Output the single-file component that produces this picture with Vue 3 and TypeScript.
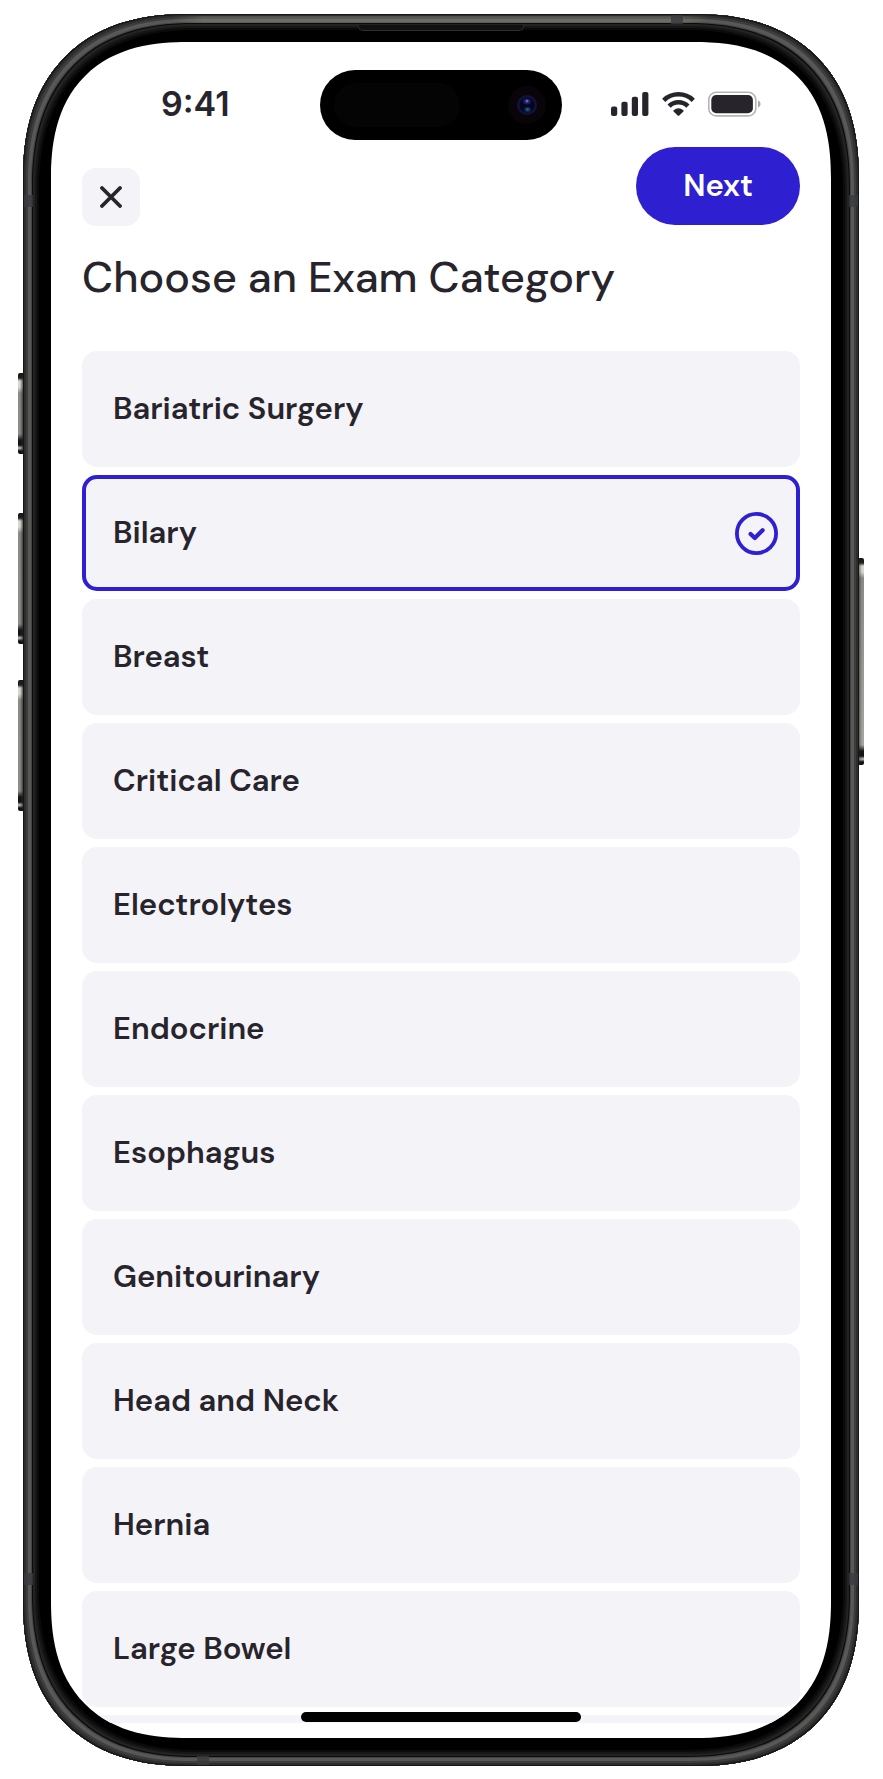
<script setup lang="ts">
import { ref } from 'vue'

const categories: string[] = [
  'Bariatric Surgery',
  'Bilary',
  'Breast',
  'Critical Care',
  'Electrolytes',
  'Endocrine',
  'Esophagus',
  'Genitourinary',
  'Head and Neck',
  'Hernia',
  'Large Bowel',
]

const selected = ref<string>('Bilary')
</script>

<template>
  <div class="stage">
    <div class="device">
      <span class="key action"></span>
      <span class="key volume-up"></span>
      <span class="key volume-down"></span>
      <span class="key power"></span>
      <div class="body">
        <span class="sheen"></span>
        <span class="band band-top"></span>
        <span class="band band-left-high"></span>
        <span class="band band-right-high"></span>
        <span class="band band-left-low"></span>
        <span class="band band-right-low"></span>
        <span class="band band-bottom"></span>
        <span class="earpiece"></span>

        <main class="screen">
          <div class="status">
            <span class="time">9:41</span>
            <div class="island">
              <span class="sensor"></span>
              <svg class="camera" viewBox="0 0 38 38" aria-hidden="true">
                <circle cx="19" cy="19" r="19" fill="#08040a" />
                <circle cx="19" cy="19" r="10" fill="#11143a" />
                <circle cx="19" cy="19" r="7.5" fill="#05051f" />
                <ellipse cx="19" cy="15.5" rx="4" ry="3" fill="#1a1a62" />
                <circle cx="19" cy="15" r="1.5" fill="#6468ac" />
                <ellipse cx="19.5" cy="23.5" rx="3.5" ry="2.5" fill="#102a58" />
                <circle cx="19.5" cy="23.5" r="1.3" fill="#206a68" />
              </svg>
            </div>
            <div class="indicators">
              <svg width="38" height="26" viewBox="0 0 38 26" aria-hidden="true">
                <g fill="#27242c">
                  <rect x="0" y="15.5" width="6.2" height="9.5" rx="2" />
                  <rect x="10.4" y="10.7" width="6.2" height="14.3" rx="2" />
                  <rect x="20.8" y="5.7" width="6.2" height="19.3" rx="2" />
                  <rect x="31.2" y="1" width="6.2" height="24" rx="2" />
                </g>
              </svg>
              <svg width="33" height="26" viewBox="0 0 33 26" aria-hidden="true">
                <g fill="none" stroke="#27242c" stroke-width="4.6">
                  <path d="M1.7 9.3 A21.3 21.3 0 0 1 31.3 9.3" />
                  <path d="M7.1 15.1 A13.4 13.4 0 0 1 25.9 15.1" />
                </g>
                <path d="M11.6 19.2 Q16.5 15.2 21.4 19.2 Q22 19.8 21.4 20.4 L17.3 24.5 Q16.5 25.2 15.7 24.5 L11.6 20.4 Q11 19.8 11.6 19.2Z" fill="#27242c" />
              </svg>
              <svg width="53" height="26" viewBox="0 0 53 26" aria-hidden="true">
                <rect x="0.8" y="1.3" width="47" height="23.6" rx="7.5" fill="none" stroke="#b5b4b8" stroke-width="1.6" />
                <rect x="3.3" y="4" width="41.6" height="18.2" rx="5" fill="#27242c" />
                <path d="M50 9.3 Q52.6 10.4 52.6 13 Q52.6 15.6 50 16.8Z" fill="#aaa9ad" />
              </svg>
            </div>
          </div>

          <header class="toolbar">
            <button class="close" type="button" aria-label="Close">
              <svg width="22" height="22" viewBox="0 0 22 22" aria-hidden="true">
                <path d="M2 2 L20 20 M20 2 L2 20" stroke="#27242c" stroke-width="3.8" stroke-linecap="round" />
              </svg>
            </button>
            <button class="next" type="button">Next</button>
          </header>

          <h1 id="heading">Choose an Exam Category</h1>

          <div class="list" role="radiogroup" aria-labelledby="heading">
            <label v-for="name in categories" :key="name" class="option" :class="{ chosen: selected === name }">
              <input v-model="selected" type="radio" name="category" :value="name" />
              <span>{{ name }}</span>
              <svg v-if="selected === name" width="43" height="43" viewBox="0 0 43 43" fill="none" stroke="#2e1fd1" aria-hidden="true">
                <circle cx="21.5" cy="21.5" r="19.6" stroke-width="3.8" />
                <path d="M15.6 22 L19.8 26 L27.6 18.2" stroke-width="4.2" stroke-linecap="round" stroke-linejoin="round" />
              </svg>
            </label>
            <div class="peek"></div>
          </div>

          <span class="home"></span>
        </main>
      </div>
    </div>
  </div>
</template>

<style>
body {
  margin: 0;
  background: #fff;
}
</style>

<style scoped>
* {
  box-sizing: border-box;
}

.stage {
  padding: 14px 24px 12px 23px;
  color: #27242c;
  font-family: "DM Sans", Inter, "Liberation Sans", sans-serif;
}

.device {
  position: relative;
}

.body {
  position: relative;
  padding: 28px;
  border-radius: 147px;
  background: #000;
  box-shadow:
    inset 0 0 0 1px #151515,
    inset 0 0 0 3px #2c2d2c,
    inset 0 0 0 5px #3c3d3c,
    inset 0 0 0 8px #585856,
    inset 0 0 0 9px #444543,
    inset 0 0 0 10px #0b0b0b,
    inset 0 0 0 12px #222322,
    inset 0 0 0 14px #161616,
    inset 0 0 0 16px #0a0a0a;
}

.screen {
  position: relative;
  display: flex;
  flex-direction: column;
  padding: 0 31px 15px;
  border-radius: 119px;
  background: #fff;
  overflow: hidden;
}

@supports (corner-shape: superellipse(1.2)) {
  .body {
    border-radius: 165px;
    corner-shape: superellipse(1.22);
  }

  .screen {
    border-radius: 137px;
    corner-shape: superellipse(1.28);
  }
}

.sheen {
  position: absolute;
  top: 2px;
  right: 150px;
  left: 150px;
  height: 7px;
  background: linear-gradient(to right, transparent, #8a888260 30px, #8a888260 calc(100% - 30px), transparent);
}

.key {
  position: absolute;
  left: -5px;
  width: 6px;
  border-radius: 2px 0 0 2px;
  background:
    linear-gradient(to right, transparent 2px, #222222b0 5px),
    linear-gradient(#111 0, #222 5px, #d8d8d0 8px, #d8d8d0 14px, #8a8b86 20px, #8d8e88 calc(100% - 20px), #161616 calc(100% - 14px), #111 calc(100% - 9px), #c5c5bf calc(100% - 6px), #111 calc(100% - 3px));
}

.action {
  top: 359px;
  height: 81px;
}

.volume-up {
  top: 499px;
  height: 131px;
}

.volume-down {
  top: 666px;
  height: 131px;
}

.power {
  top: 544px;
  right: -5px;
  left: auto;
  height: 207px;
  border-radius: 0 2px 2px 0;
  background:
    linear-gradient(to left, transparent 2px, #22222280 5px),
    linear-gradient(#111 0, #222 5px, #d8d8d0 8px, #d8d8d0 14px, #8a8b86 20px, #a5a5a0 calc(100% - 20px), #161616 calc(100% - 14px), #111 calc(100% - 9px), #c5c5bf calc(100% - 6px), #111 calc(100% - 3px));
}

.band {
  position: absolute;
  width: 9px;
  height: 12px;
  background: #3a3b3ed0;
}

.band-left-high {
  top: 181px;
  left: 1px;
}

.band-right-high {
  top: 181px;
  right: 1px;
}

.band-left-low {
  bottom: 181px;
  left: 1px;
}

.band-right-low {
  bottom: 181px;
  right: 1px;
}

.band-top {
  top: 1px;
  right: 176px;
  width: 12px;
  height: 9px;
}

.band-bottom {
  bottom: 1px;
  left: 174px;
  width: 12px;
  height: 9px;
}

.earpiece {
  position: absolute;
  top: 11px;
  left: 50%;
  width: 166px;
  height: 6px;
  border: 1px solid #2e2e2e;
  border-top: 0;
  border-radius: 0 0 5px 5px;
  background: #101010;
  transform: translateX(-50%);
}

.status {
  position: relative;
  display: flex;
  align-items: center;
  justify-content: space-between;
  height: 105px;
  padding: 18px 39px 0 79px;
}

.time {
  font-family: Inter, "Liberation Sans", sans-serif;
  font-size: 34px;
  font-weight: 600;
  line-height: 40px;
}

.island {
  position: absolute;
  top: 28px;
  left: 50%;
  display: flex;
  align-items: center;
  justify-content: space-between;
  width: 242px;
  height: 70px;
  padding: 0 16px 0 14px;
  border-radius: 35px;
  background: #000;
  transform: translateX(-50%);
}

.sensor {
  width: 126px;
  height: 44px;
  border-radius: 22px;
  background: #040404;
}

.camera {
  width: 38px;
  height: 38px;
}

.indicators {
  display: flex;
  align-items: center;
  gap: 13px;
}

.toolbar {
  display: flex;
  align-items: flex-start;
  justify-content: space-between;
}

button {
  border: 0;
  font: inherit;
  cursor: pointer;
}

.close {
  display: grid;
  place-items: center;
  width: 58px;
  height: 58px;
  margin-top: 21px;
  padding: 0;
  border-radius: 14px;
  background: #f4f3f8;
}

.next {
  height: 78px;
  padding: 0 47px 2px;
  border-radius: 39px;
  background: #2e1fd1;
  color: #fff;
  font-size: 31px;
  font-weight: 600;
}

h1 {
  margin: 20px 0 43px;
  font-size: 43px;
  font-weight: 500;
  line-height: 62px;
  white-space: nowrap;
}

.list {
  display: flex;
  flex-direction: column;
  gap: 8px;
}

.option {
  position: relative;
  display: flex;
  align-items: center;
  justify-content: space-between;
  height: 116px;
  padding: 0 22px 0 31px;
  border-radius: 15px;
  background: #f4f3f8;
  font-size: 31px;
  font-weight: 600;
  line-height: 40px;
  cursor: pointer;
}

.option input {
  position: absolute;
  inset: 0;
  margin: 0;
  opacity: 0;
  cursor: pointer;
}

.chosen {
  box-shadow: inset 0 0 0 4px #2e1fd1;
}

.peek {
  height: 8px;
  background: #f4f3f8;
}

.home {
  position: absolute;
  bottom: 16px;
  left: 50%;
  width: 280px;
  height: 10px;
  border-radius: 5px;
  background: #000;
  transform: translateX(-50%);
}
</style>
